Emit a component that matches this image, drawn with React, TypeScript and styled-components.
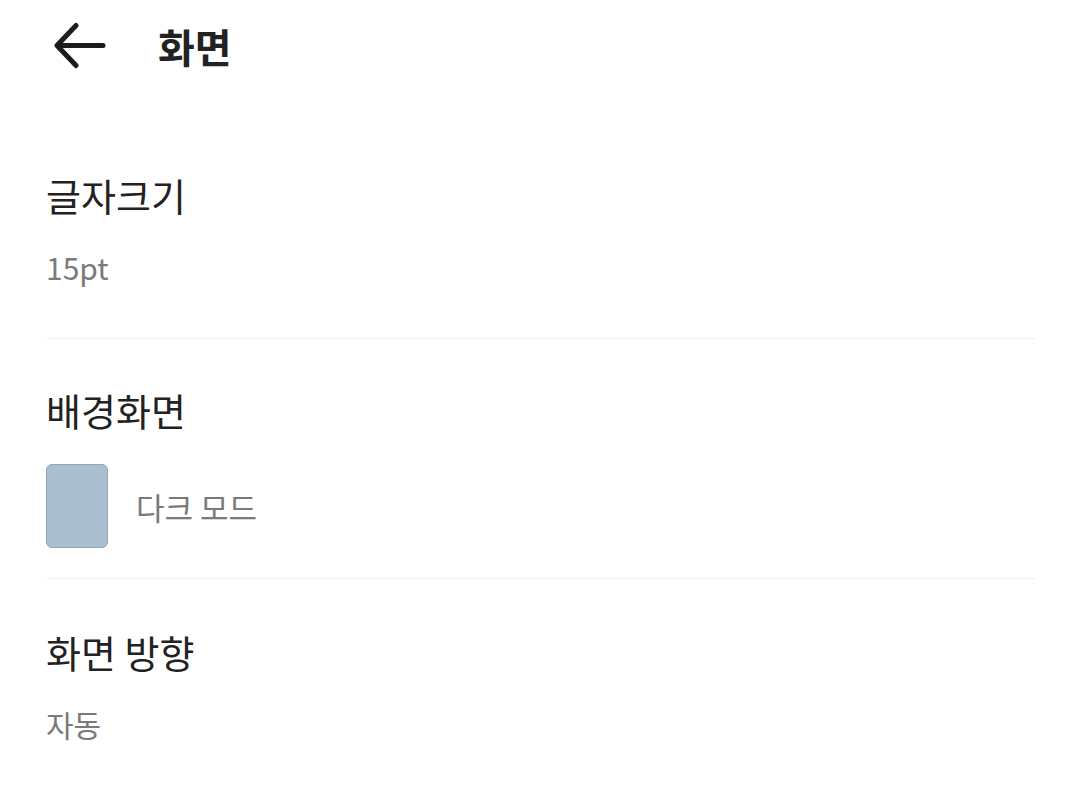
import React from "react";
import styled, { createGlobalStyle } from "styled-components";

const Global = createGlobalStyle`
  html, body { margin: 0; padding: 0; background: #ffffff; }
  body { font-family: "Noto Sans CJK KR", "Noto Sans", sans-serif; }
`;

const Page = styled.div`
  width: 1080px;
  min-height: 797px;
  background: #fff;
  box-sizing: border-box;
  padding: 0 45px 0 46px;
`;

const Header = styled.header`
  height: 92px;
  display: flex;
  align-items: center;
  gap: 52px;
`;

const BackButton = styled.button`
  border: 0;
  background: none;
  padding: 0;
  margin-left: 8px;
  width: 52px;
  height: 50px;
  display: flex;
  align-items: center;
  justify-content: center;
  color: #1c1c1c;
`;

const Title = styled.h1`
  margin: 0;
  font-size: 40px;
  font-weight: 700;
  color: #222;
  line-height: 46px;
`;

const Section = styled.section<{ $top: number; $last?: boolean }>`
  display: flex;
  flex-direction: column;
  padding: ${(p) => p.$top}px 0 30px;
  border-bottom: ${(p) => (p.$last ? "0" : "1px solid #efefef")};
`;

const Label = styled.div`
  font-size: 38px;
  line-height: 46px;
  color: #222;
  font-weight: 400;
`;

const Value = styled.div`
  margin-top: 29px;
  margin-bottom: 21px;
  font-size: 30px;
  line-height: 40px;
  color: #7a7a7a;
`;

const ThemeRow = styled.div`
  margin-top: 31px;
  display: flex;
  align-items: center;
  gap: 28px;
`;

const Swatch = styled.div`
  width: 60px;
  height: 82px;
  border-radius: 6px;
  background: #aabfd0;
  border: 1px solid #93a6b5;
`;

const SwatchLabel = styled.span`
  font-size: 31px;
  color: #7a7a7a;
`;

export default function App() {
  return (
    <Page>
      <Global />
      <Header>
        <BackButton aria-label="뒤로">
          <svg width="52" height="50" viewBox="0 0 52 50" fill="none">
            <path
              d="M49 24.5H4M22 4.5L3 24.5L22 44.5"
              stroke="#1c1c1c"
              strokeWidth="5"
              strokeLinecap="round"
              strokeLinejoin="round"
            />
          </svg>
        </BackButton>
        <Title>화면</Title>
      </Header>
      <Section $top={80}>
        <Label>글자크기</Label>
        <Value>15pt</Value>
      </Section>
      <Section $top={48}>
        <Label>배경화면</Label>
        <ThemeRow>
          <Swatch />
          <SwatchLabel>다크 모드</SwatchLabel>
        </ThemeRow>
      </Section>
      <Section $top={50} $last>
        <Label>화면 방향</Label>
        <Value>자동</Value>
      </Section>
    </Page>
  );
}
